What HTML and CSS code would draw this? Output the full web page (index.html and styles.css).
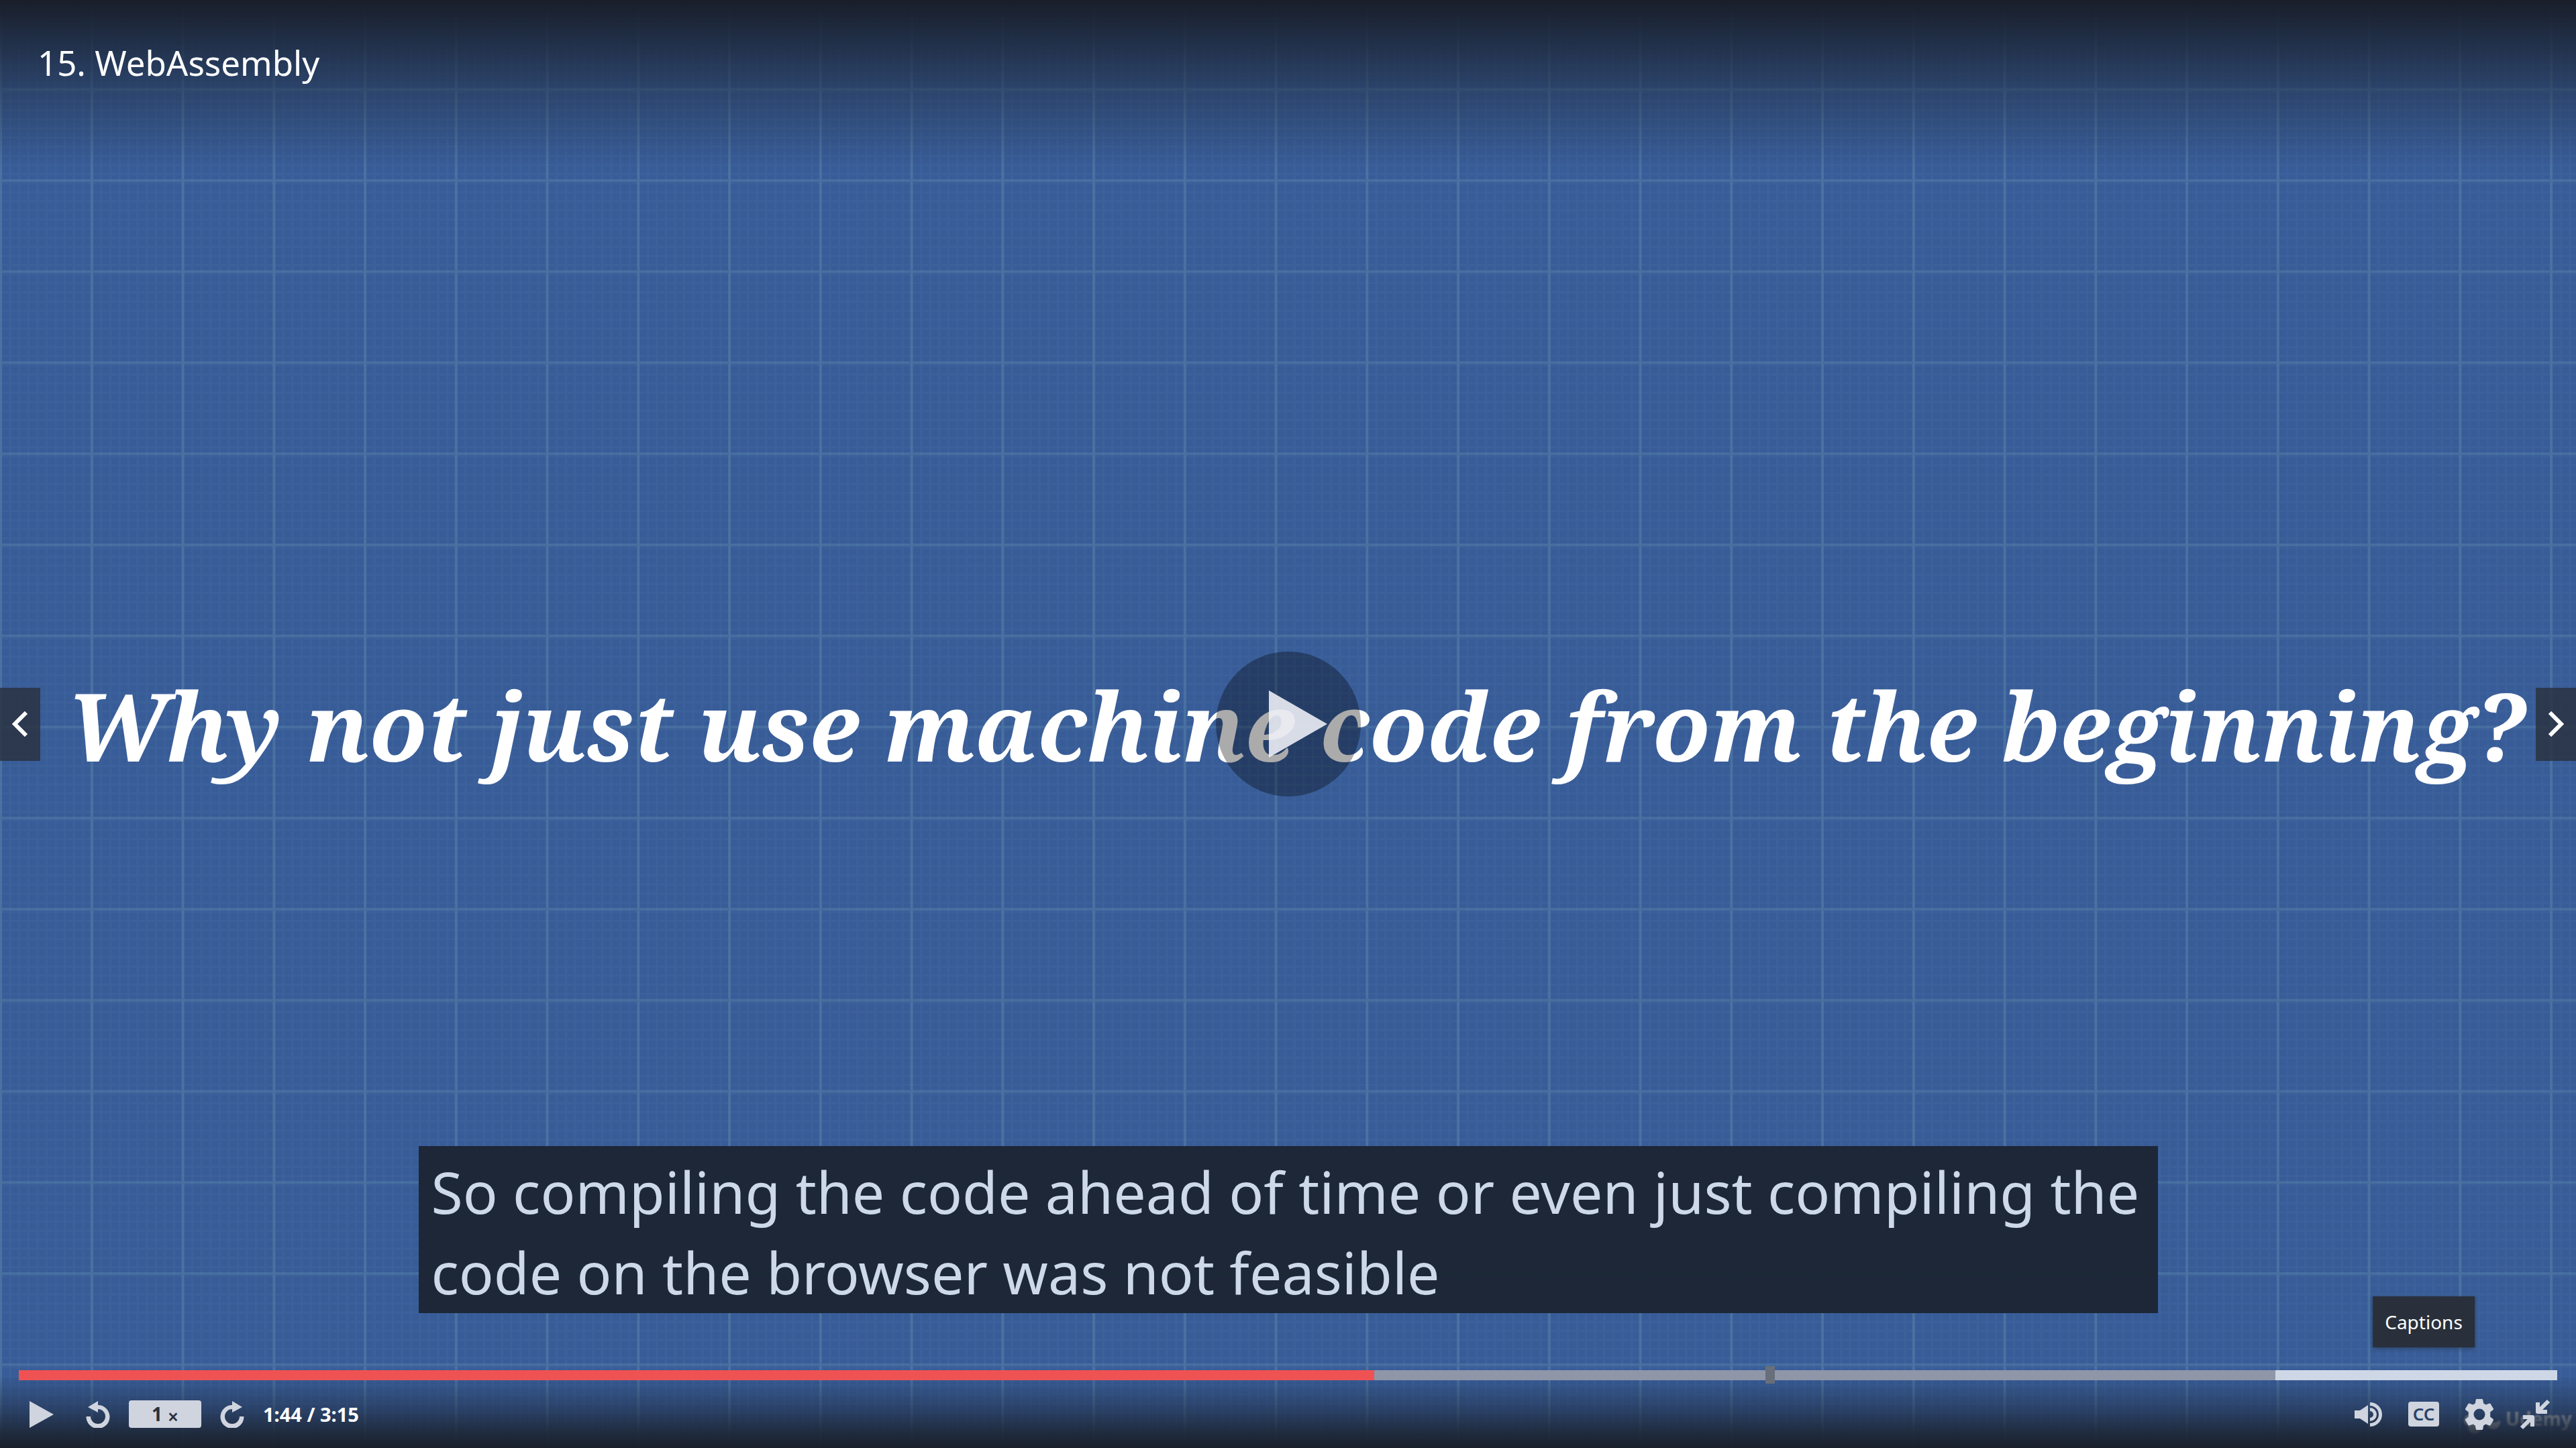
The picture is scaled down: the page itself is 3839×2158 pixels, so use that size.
FILE: index.html
```html
<!DOCTYPE html>
<html lang="en">
<head>
<meta charset="utf-8">
<meta name="viewport" content="width=device-width, initial-scale=1">
<title>15. WebAssembly</title>
<link rel="stylesheet" href="styles.css">
</head>
<body>
<main class="player">
  <svg class="video" viewBox="0 0 3839 2158" preserveAspectRatio="xMidYMid slice" aria-hidden="true">
    <defs>
      <pattern id="fine" width="13.575" height="13.575" patternUnits="userSpaceOnUse">
        <path d="M0 0H13.575V3H3V13.575H0Z" fill="#6f9fc0" fill-opacity=".07"/>
      </pattern>
      <pattern id="coarse" x="-1" y="-4.5" width="135.75" height="135.75" patternUnits="userSpaceOnUse">
        <path d="M0 0H135.75V4H4V135.75H0Z" fill="#6fa3b8" fill-opacity=".25"/>
      </pattern>
      <filter id="soft" x="-10%" y="-30%" width="120%" height="160%"><feGaussianBlur stdDeviation="1"/></filter>
    </defs>
    <rect width="3839" height="2158" fill="#385c98"/>
    <rect width="3839" height="2158" fill="url(#fine)"/>
    <rect width="3839" height="2158" fill="url(#coarse)"/>
    <g class="watermark" filter="url(#soft)">
      <circle cx="3681" cy="2117" r="9"/>
      <circle cx="3688" cy="2127" r="10"/>
      <path d="M3709 2113a9 9 0 0 0 9 7 8 8 0 0 0 7-4 10 10 0 1 1-16-3Z"/>
      <text x="3734" y="2125">Udemy</text>
    </g>
  </svg>

  <div class="stage">
    <button class="nav" aria-label="Previous lecture">
      <svg width="24" height="38" viewBox="0 0 24 38"><path d="M21 2 4 19l17 17"/></svg>
    </button>
    <h1 class="slide-title">Why not just use machine code from the beginning?</h1>
    <button class="nav" aria-label="Next lecture">
      <svg width="24" height="38" viewBox="0 0 24 38"><path d="m3 2 17 17L3 36"/></svg>
    </button>
  </div>

  <button class="big-play" aria-label="Play video">
    <svg width="90" height="104" viewBox="0 0 90 104"><path d="M2 2 89 52 2 102Z"/></svg>
  </button>

  <header class="top"><h2 class="lecture">15. WebAssembly</h2></header>

  <p class="caption">So compiling the code ahead of time or even just compiling the code on the browser was not feasible</p>

  <footer class="controls">
    <div class="timeline">
      <input class="seek" type="range" min="0" max="195" value="104" aria-label="Seek">
      <span class="bookmark" style="left: 68.8%"></span>
    </div>
    <div class="row">
      <button class="control play" aria-label="Play">
        <svg width="36" height="40" viewBox="0 0 36 40"><path d="M0 0 36 20 0 40Z"/></svg>
      </button>
      <button class="control" aria-label="Rewind">
        <svg width="36" height="40" viewBox="0 0 36 40"><path d="M18 0V6A17.500 17.500 0 1 1 .5 23H7A11 11 0 1 0 18 12V17L3 9Z"/></svg>
      </button>
      <button class="rate" aria-label="Playback rate">1<span class="times">×</span></button>
      <button class="control" aria-label="Forward">
        <svg width="36" height="40" viewBox="0 0 36 40"><path d="M18 0V6A17.500 17.500 0 1 0 35.500 23H29A11 11 0 1 1 18 12V17L33 9Z"/></svg>
      </button>
      <span class="time">1:44 / 3:15</span>
      <span class="spacer"></span>
      <button class="control" aria-label="Volume">
        <svg width="42" height="36" viewBox="0 0 42 36"><path d="M0 12H8L20 4V32L8 24H0Z"/><path d="M23 0a18 18 0 0 1 0 36v-5a13 13 0 0 0 0-26Z"/><path d="M23 8a10 10 0 0 1 0 20v-5a5 5 0 0 0 0-10Z"/></svg>
      </button>
      <span class="cc-wrap">
        <button class="cc" aria-label="Captions" aria-describedby="tip">CC</button>
        <span class="tooltip" id="tip" role="tooltip">Captions</span>
      </span>
      <button class="control" aria-label="Settings">
        <svg width="44" height="46" viewBox="0 0 44 46"><path fill-rule="evenodd" d="M18 0H26Q27 0 27.200 1L28.200 6.600 31.600 8.600 37 6.500Q38 6.200 38.500 7L43 14.500Q43.400 15.300 42.700 16L38.200 19.600V26.400L42.700 30Q43.400 30.700 43 31.500L38.500 39Q38 39.800 37 39.500L31.600 37.400 28.200 39.400 27.200 45Q27 46 26 46H18Q17 46 16.800 45L15.800 39.400 12.400 37.400 7 39.500Q6 39.800 5.500 39L1 31.500Q.6 30.700 1.300 30L5.800 26.400V19.600L1.300 16Q.6 15.300 1 14.500L5.500 7Q6 6.200 7 6.500L12.400 8.600 15.800 6.600 16.800 1Q17 0 18 0ZM22 14.500a8.500 8.500 0 1 0 0 17 8.500 8.500 0 0 0 0-17Z"/></svg>
      </button>
      <button class="control" aria-label="Exit fullscreen">
        <svg width="46" height="46" viewBox="0 0 46 46"><g class="arrow"><path d="M43 3 27 19M27 5V19H41"/><path d="M3 43 19 27M5 27H19V41"/></g></svg>
      </button>
    </div>
  </footer>
</main>
</body>
</html>
```
FILE: styles.css
```css
* { box-sizing: border-box; }

body {
  margin: 0;
  background: #385c98;
  font-family: "Noto Sans", "Open Sans", sans-serif;
  color: #fff;
}

button {
  margin: 0;
  padding: 0;
  border: 0;
  background: none;
  font: inherit;
  color: inherit;
  cursor: pointer;
}

svg { display: block; }

.player {
  position: relative;
  display: flex;
  flex-direction: column;
  align-items: center;
  min-height: 100vh;
  overflow: hidden;
}

.video {
  position: absolute;
  inset: 0;
  width: 100%;
  height: 100%;
}

.watermark { fill: #e0e0e0; fill-opacity: .9; }
.watermark text { font: bold 28px "Open Sans", sans-serif; }

/* Slide text and lecture arrows, over the video */
.stage {
  position: absolute;
  inset: 0;
  display: flex;
  align-items: center;
  justify-content: space-between;
}

.slide-title {
  flex: 1;
  margin: 0;
  padding: 2px 0 0 24px;
  font: italic 700 140px "Noto Serif", "DejaVu Serif", serif;
  text-align: center;
  white-space: nowrap;
}

.nav {
  display: flex;
  align-items: center;
  justify-content: center;
  width: 60px;
  height: 109px;
  background: rgba(41, 48, 60, .8);
}

.nav path {
  fill: none;
  stroke: #fff;
  stroke-width: 6;
}

.big-play {
  position: absolute;
  top: 50%;
  left: 50%;
  display: flex;
  align-items: center;
  justify-content: center;
  width: 216px;
  height: 216px;
  padding-left: 28px;
  border-radius: 50%;
  background: rgba(0, 0, 0, .33);
  transform: translate(-50%, -50%);
}

.big-play path { fill: rgba(242, 244, 250, .87); }

.top {
  position: relative;
  width: 100%;
  height: 250px;
  padding: 55px 56px 0;
  background: linear-gradient(#191e29, rgba(27, 37, 54, .88) 20%, rgba(32, 46, 68, .5) 56%, rgba(40, 60, 90, 0));
}

.lecture {
  margin: 0;
  font-size: 51px;
  font-weight: 400;
  line-height: 76px;
}

.caption {
  position: relative;
  width: 2592px;
  max-width: 90%;
  margin: auto 0 85px;
  padding: 8px 19px 1px;
  background: rgba(27, 36, 50, .95);
  font-size: 86px;
  line-height: 120px;
  color: #cdd8e8;
}

.controls {
  position: relative;
  width: 100%;
  padding: 0 28px;
  background: linear-gradient(rgba(26, 32, 44, 0) 5%, rgba(28, 38, 56, .5) 50%, rgba(28, 36, 50, .88) 80%, #1a202c);
}

.timeline {
  position: relative;
  height: 15px;
}

.seek {
  display: block;
  width: 100%;
  height: 15px;
  margin: 0;
  appearance: none;
  background: linear-gradient(90deg, #ee5253 0 53.4%, #8f96a8 53.4% 88.9%, #ced7e5 88.9%);
}

.seek::-webkit-slider-thumb {
  appearance: none;
  width: 1px;
  height: 15px;
  opacity: 0;
}

.bookmark {
  position: absolute;
  top: -6px;
  width: 14px;
  height: 26px;
  background: #686f7a;
}

.row {
  display: flex;
  align-items: center;
  gap: 28px;
  height: 101px;
  padding: 0 10px 0 16px;
}

.control { color: #cfd4df; }
.control svg { fill: currentColor; }
.play { margin-right: 20px; }

.arrow {
  fill: none;
  stroke: currentColor;
  stroke-width: 6;
  stroke-linejoin: round;
}

.rate {
  width: 108px;
  height: 41px;
  border-radius: 4px;
  background: #cfd4df;
  font-size: 28px;
  font-weight: 700;
  line-height: 41px;
  color: #29303b;
}

.times {
  margin-left: 8px;
  font-weight: 600;
  vertical-align: -4px;
  line-height: 1;
}

.time {
  font-size: 29px;
  font-weight: 700;
}

.spacer { flex: 1; }

.spacer ~ * + * { margin-left: 10px; }

.cc-wrap { position: relative; }

.cc {
  display: block;
  width: 46px;
  height: 37px;
  border-radius: 4px;
  background: #cfd4df;
  font-size: 26px;
  font-weight: 600;
  line-height: 37px;
  text-align: center;
  color: #2b4266;
}

.tooltip {
  position: absolute;
  bottom: 118px;
  left: 50%;
  padding: 0 18px;
  background: #29303b;
  box-shadow: 0 2px 6px rgba(20, 23, 28, .4);
  font-size: 28px;
  line-height: 76px;
  transform: translateX(-50%);
}
```
